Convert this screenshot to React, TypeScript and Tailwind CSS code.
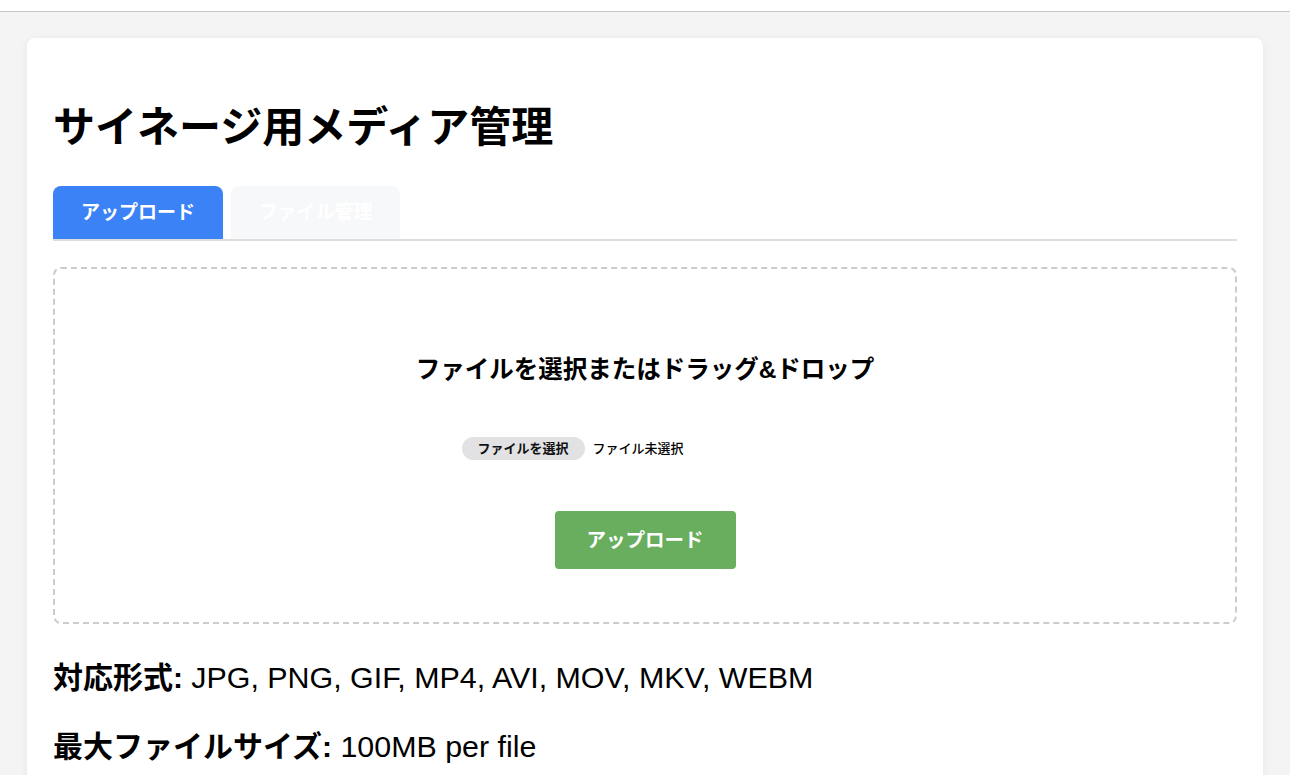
export default function App() {
  const font = {
    fontFamily: '"Liberation Sans", "Noto Sans CJK JP", sans-serif',
  };

  return (
    <div className="min-h-[775px] bg-[#f4f4f4] overflow-hidden" style={font}>
      <div className="h-[12px] bg-white border-b border-[#c6c6c6]" />
      <div className="mx-[27px] mt-[26px] bg-white rounded-lg shadow-[0_2px_10px_rgba(0,0,0,0.06)] px-[26px] pt-[65px] pb-10">
        <h1 className="text-[42px] leading-[50px] font-bold text-black">
          サイネージ用メディア管理
        </h1>

        <div className="mt-[33px] flex gap-2 border-b-2 border-[#dddddd]">
          <button className="w-[170px] h-[53px] pt-[2px] rounded-t-lg bg-[#3b82f6] text-white text-[19px] font-bold">
            アップロード
          </button>
          <button className="w-[169px] h-[53px] pt-[2px] rounded-t-lg bg-[#f7f8fa] text-white text-[19px] font-bold">
            ファイル管理
          </button>
        </div>

        <div className="mt-[26px] border-2 border-dashed border-[#cccccc] rounded-lg pt-[85px] pb-[53px] flex flex-col items-center">
          <h3 className="text-[24.5px] leading-[32px] font-bold text-black">
            ファイルを選択またはドラッグ&ドロップ
          </h3>

          <div className="mt-[51px] w-[367px] h-[23px] flex items-center">
            <span className="h-[23px] w-[123px] rounded-full bg-[#e2e2e5] flex items-center justify-center text-[13px] font-semibold text-[#111]">
              ファイルを選択
            </span>
            <span className="ml-2 text-[13px] font-medium text-black">
              ファイル未選択
            </span>
          </div>

          <button className="mt-[51px] w-[181px] h-[58px] pt-[2px] rounded bg-[#69ad5e] text-white text-[19.5px] font-bold">
            アップロード
          </button>
        </div>

        <p className="mt-[35px] text-[30px] leading-[36px] text-black">
          <strong className="font-bold">対応形式:</strong>{" "}
          <span className="text-[30.4px]">JPG, PNG, GIF, MP4, AVI, MOV, MKV, WEBM</span>
        </p>
        <p className="mt-[32px] text-[30px] leading-[36px] text-black">
          <strong className="font-bold">最大ファイルサイズ:</strong>{" "}
          <span className="text-[30.4px]">100MB per file</span>
        </p>
      </div>
    </div>
  );
}
